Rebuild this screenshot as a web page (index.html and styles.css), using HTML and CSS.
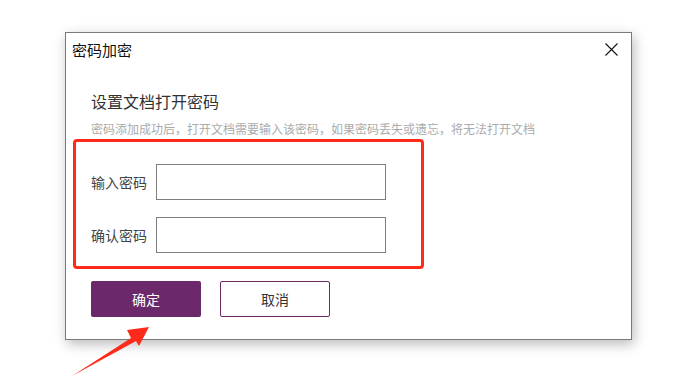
FILE: index.html
```html
<!DOCTYPE html>
<html lang="zh-CN">
<head>
    <meta charset="UTF-8">
    <title>密码加密</title>
    <link rel="stylesheet" href="styles.css">
</head>
<body>
    <div class="dialog">
        <div class="dialog-header">
            <span class="dialog-title">密码加密</span>
            <span class="close-btn">
                <svg width="13" height="13" viewBox="0 0 13 13"><path d="M0.5 0.5 L12.5 12.5 M12.5 0.5 L0.5 12.5" stroke="#111" stroke-width="1.1" fill="none"/></svg>
            </span>
        </div>
        <div class="dialog-body">
            <h2 class="heading">设置文档打开密码</h2>
            <p class="hint">密码添加成功后，打开文档需要输入该密码，如果密码丢失或遗忘，将无法打开文档</p>
            <div class="fields">
                <div class="row">
                    <label for="pwd">输入密码</label>
                    <input type="password" id="pwd">
                </div>
                <div class="row">
                    <label for="pwd2">确认密码</label>
                    <input type="password" id="pwd2">
                </div>
            </div>
            <div class="actions">
                <button type="button" class="btn btn-primary">确定</button>
                <button type="button" class="btn btn-outline">取消</button>
            </div>
        </div>
    </div>

    <svg class="arrow" width="100" height="70" viewBox="0 0 100 70">
        <polygon points="2,56 61,18 57,10 79,7 69,26 66,21" fill="#ff2a1a"/>
    </svg>
</body>
</html>
```

FILE: styles.css
```css
* {
    margin: 0;
    padding: 0;
    box-sizing: border-box;
}

body {
    font-family: "Noto Sans CJK SC", "Noto Sans", sans-serif;
    background-color: #fff;
    width: 691px;
    height: 389px;
    overflow: hidden;
    padding: 32px 0 0 65px;
}

.dialog {
    width: 567px;
    height: 308px;
    border: 1px solid #7a7a7a;
    background-color: #fff;
    box-shadow: 2px 4px 12px rgba(0, 0, 0, 0.28);
}

.dialog-header {
    height: 32px;
    display: flex;
    align-items: center;
    justify-content: space-between;
    padding: 0 13px 0 6px;
}

.dialog-title {
    font-size: 15px;
    color: #111;
}

.close-btn {
    display: flex;
}

.dialog-body {
    padding: 24px 0 0 7px;
}

.heading {
    font-size: 16px;
    font-weight: normal;
    line-height: 24px;
    color: #333;
    padding-left: 18px;
}

.hint {
    font-size: 12px;
    line-height: 18px;
    color: #ababab;
    margin-top: 7px;
    padding-left: 18px;
}

.fields {
    width: 351px;
    margin-top: 1px;
    border: 3px solid #ff2a1a;
    border-radius: 4px;
    padding: 22px 0 13px 15px;
    display: flex;
    flex-direction: column;
    gap: 17px;
}

.row {
    display: flex;
    align-items: center;
}

.row label {
    width: 65px;
    font-size: 14px;
    color: #444;
}

.row input {
    width: 230px;
    height: 36px;
    border: 1px solid #7f7f7f;
    outline: none;
}

.actions {
    display: flex;
    gap: 19px;
    margin-top: 12px;
    padding-left: 18px;
}

.btn {
    width: 110px;
    height: 36px;
    font-family: inherit;
    font-size: 14px;
    border-radius: 2px;
    cursor: pointer;
}

.btn-primary {
    background-color: #6b286b;
    color: #fff;
    border: none;
}

.btn-outline {
    background-color: #fff;
    color: #333;
    border: 1px solid #6b286b;
}

.arrow {
    position: absolute;
    left: 70px;
    top: 320px;
}
```
